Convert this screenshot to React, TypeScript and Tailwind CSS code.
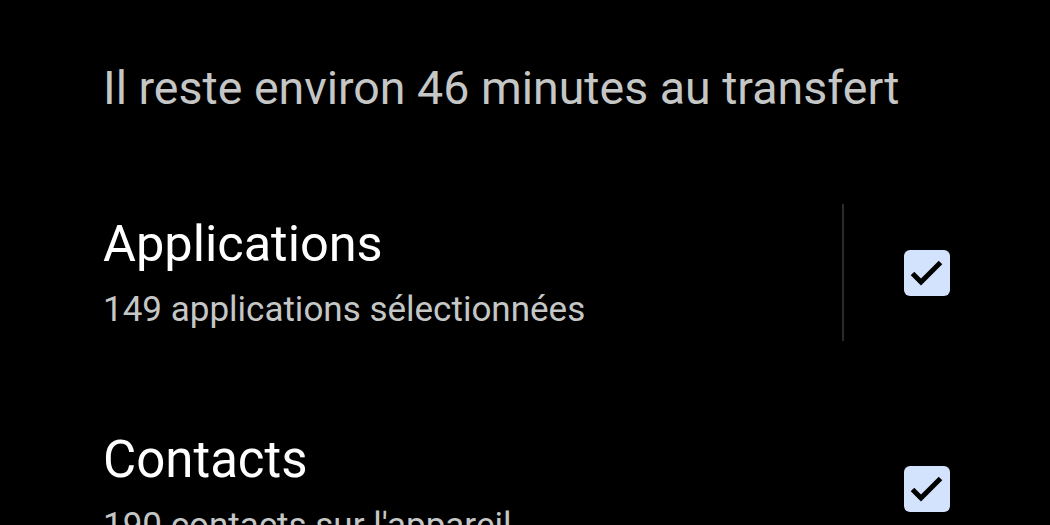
import React from "react";

function CheckBox() {
  return (
    <div className="flex h-[46px] w-[46px] items-center justify-center rounded-[6px] bg-[#d3e3fd]">
      <svg width="46" height="46" viewBox="0 0 46 46" fill="none" stroke="#000" strokeWidth="5" strokeLinejoin="miter">
        <path d="M8.5 23.5L17 32L36.5 12.5" />
      </svg>
    </div>
  );
}

export default function App() {
  return (
    <div className="h-[525px] w-[1050px] overflow-hidden bg-black pl-[103px] pr-[100px] font-['Roboto',sans-serif]">
      {/* Time remaining */}
      <p className="pt-[60px] text-[46.5px] leading-[56px] text-[#c4c7c5]">Il reste environ 46 minutes au transfert</p>

      {/* Applications */}
      <div className="mt-[88px] flex items-center">
        <div className="flex-1">
          <p className="text-[50.5px] leading-[60px] text-white">Applications</p>
          <p className="mt-[14px] text-[35px] leading-[44px] text-[#c4c7c5]">149 applications sélectionnées</p>
        </div>
        <div className="h-[137px] w-[2px] bg-[#2b2b2b]" />
        <div className="ml-[60px]">
          <CheckBox />
        </div>
      </div>

      {/* Contacts */}
      <div className="mt-[89px] flex items-center">
        <div className="flex-1">
          <p className="text-[51px] leading-[60px] text-white">Contacts</p>
          <p className="mt-[14px] text-[35px] leading-[44px] text-[#c4c7c5]">190 contacts sur l'appareil</p>
        </div>
        <CheckBox />
      </div>
    </div>
  );
}
